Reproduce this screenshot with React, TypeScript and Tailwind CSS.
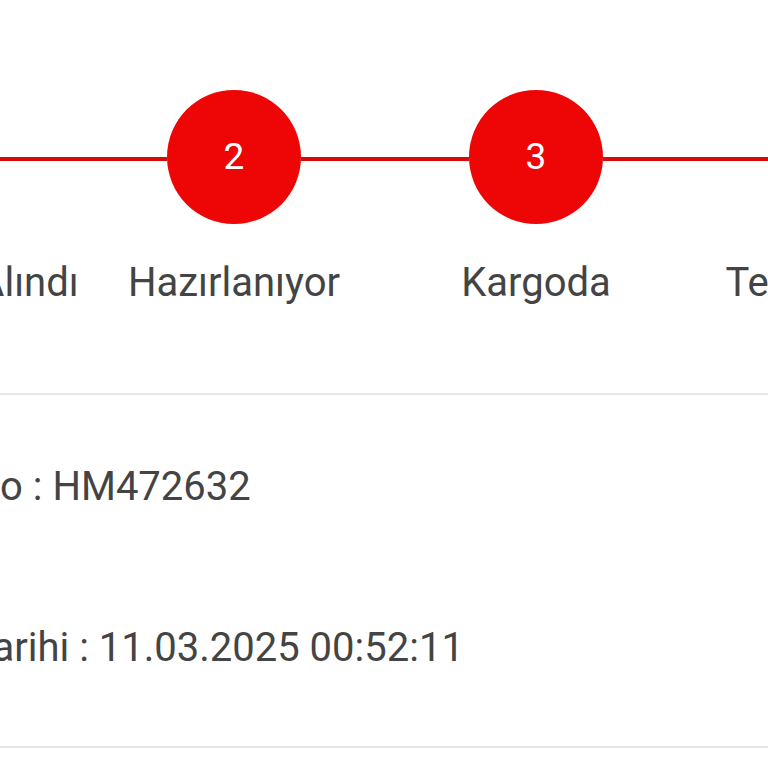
import { Fragment } from "react";

const STEPS = ["Siparişiniz Alındı", "Hazırlanıyor", "Kargoda", "Teslim Edildi"];

const INFO = [
  { label: "Sipariş No", value: "HM472632" },
  { label: "Sipariş Tarihi", value: "11.03.2025 00:52:11" },
];

export default function App() {
  return (
    <div
      className="h-[768px] w-[768px] overflow-hidden bg-white text-[#444]"
      style={{ fontFamily: "Roboto, 'Liberation Sans', sans-serif" }}
    >
      {/* adım çubuğu */}
      <div className="ml-[-219px] flex w-[1208px] pt-[90px]">
        {STEPS.map((s, i) => (
          <div key={s} className="flex w-[302px] shrink-0 flex-col items-center">
            <div className="flex w-full items-center">
              <div className={i === 0 ? "mt-[4px] h-[4px] flex-1" : "mt-[4px] h-[4px] flex-1 bg-[#d70909]"} />
              <div className="flex h-[134px] w-[134px] shrink-0 items-center justify-center rounded-full bg-[#ee0606] text-[37px] text-white">
                {i + 1}
              </div>
              <div className={i === STEPS.length - 1 ? "mt-[4px] h-[4px] flex-1" : "mt-[4px] h-[4px] flex-1 bg-[#d70909]"} />
            </div>
            <div className="mt-[35px] whitespace-nowrap text-[40px] leading-[48px]">{s}</div>
          </div>
        ))}
      </div>

      <div className="mt-[86px] h-[2px] w-full bg-[#e6e6e6]" />

      {/* sipariş bilgileri */}
      <div className="ml-[-160px] flex flex-col gap-[113px] pt-[68px] pb-[74px]">
        {INFO.map((r) => (
          <Fragment key={r.label}>
            <div className="whitespace-nowrap text-[40px] leading-[48px]">
              {r.label} : {r.value}
            </div>
          </Fragment>
        ))}
      </div>

      <div className="h-[2px] w-full bg-[#e6e6e6]" />
    </div>
  );
}
